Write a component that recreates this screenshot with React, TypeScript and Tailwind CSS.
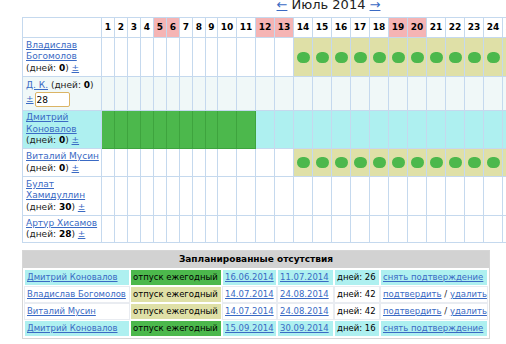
import React from "react";

const DAYS = Array.from({ length: 31 }, (_, i) => i + 1);
const WEEKEND = new Set([5, 6, 12, 13, 19, 20, 26, 27]);

type Kind = "empty" | "dot" | "green" | "cyan" | "light";

type Person = {
  name: React.ReactNode;
  days: number;
  height: string;
  nameBg: string;
  cell: (d: number) => Kind;
};

const PEOPLE: Person[] = [
  {
    name: (
      <>
        Владислав
        <br />
        Богомолов
      </>
    ),
    days: 0,
    height: "h-[39px]",
    nameBg: "bg-white",
    cell: (d) => (d >= 14 ? "dot" : "empty"),
  },
  {
    name: null,
    days: 0,
    height: "h-[34px]",
    nameBg: "bg-[#f0f8f8]",
    cell: () => "light",
  },
  {
    name: (
      <>
        Дмитрий
        <br />
        Коновалов
      </>
    ),
    days: 0,
    height: "h-[38px]",
    nameBg: "bg-[#aef0f0]",
    cell: (d) => (d <= 11 ? "green" : "cyan"),
  },
  {
    name: "Виталий Мусин",
    days: 0,
    height: "h-[28px]",
    nameBg: "bg-white",
    cell: (d) => (d >= 14 ? "dot" : "empty"),
  },
  {
    name: (
      <>
        Булат
        <br />
        Хамидуллин
      </>
    ),
    days: 30,
    height: "h-[39px]",
    nameBg: "bg-white",
    cell: () => "empty",
  },
  {
    name: "Артур Хисамов",
    days: 28,
    height: "h-[27px]",
    nameBg: "bg-white",
    cell: () => "empty",
  },
];

const ABSENCES = [
  { name: "Дмитрий Коновалов", confirmed: true, from: "16.06.2014", to: "11.07.2014", days: 26 },
  { name: "Владислав Богомолов", confirmed: false, from: "14.07.2014", to: "24.08.2014", days: 42 },
  { name: "Виталий Мусин", confirmed: false, from: "14.07.2014", to: "24.08.2014", days: 42 },
  { name: "Дмитрий Коновалов", confirmed: true, from: "15.09.2014", to: "30.09.2014", days: 16 },
];

const link = "text-[#3a6ac4] underline";

const DayCell = ({ kind }: { kind: Kind }) => {
  if (kind === "dot")
    return (
      <td className="border border-[#c5d9ee] bg-[#dfe0a7] p-0">
        <span className="block mx-auto w-[13px] h-[11px] rounded-full bg-[#4cb84c]" />
      </td>
    );
  if (kind === "green") return <td className="border border-[#3ea43e] bg-[#4cb84c] p-0" />;
  if (kind === "cyan") return <td className="border border-[#c5d9ee] bg-[#aef0f0] p-0" />;
  if (kind === "light") return <td className="border border-[#c5d9ee] bg-[#f0f8f8] p-0" />;
  return <td className="border border-[#c5d9ee] bg-white p-0" />;
};

export default function App() {
  return (
    <div className="w-[506px] h-[344px] overflow-hidden bg-white font-['DejaVu_Sans',Verdana,sans-serif] text-[9px] leading-[11.5px] text-[#222]">
      <div className="pl-[22px]">
        {/* month switcher */}
        <div className="w-[613px] -mt-[2px] mb-[6px] h-[13px] text-center text-[13px] leading-[13px] text-[#222] whitespace-nowrap">
          <a className={link}>←</a>&nbsp;Июль 2014&nbsp;<a className={link}>→</a>
        </div>

        {/* calendar grid */}
        <table className="border-collapse table-fixed w-[613px]">
          <colgroup>
            <col className="w-[79px]" />
            {DAYS.map((d) => (
              <col key={d} className={d < 9 ? "w-[13px]" : d === 9 ? "w-[12px]" : "w-[19px]"} />
            ))}
          </colgroup>
          <thead>
            <tr>
              <th className="border border-[#c5d9ee] h-[20px] bg-white" />
              {DAYS.map((d) => (
                <th
                  key={d}
                  className={`border border-[#c5d9ee] p-0 text-center font-bold text-black ${
                    WEEKEND.has(d) ? "bg-[#f5b4b4]" : "bg-white"
                  }`}
                >
                  {d}
                </th>
              ))}
            </tr>
          </thead>
          <tbody>
            {PEOPLE.map((p, i) => (
              <tr key={i}>
                <td
                  className={`border border-[#c5d9ee] ${p.height} ${p.nameBg} px-[3px] py-[1px] align-middle whitespace-nowrap`}
                >
                  {p.name ? (
                    <>
                      <a className={link}>{p.name}</a>
                      <br />
                      (дней: <b className="text-black">{p.days}</b>) <a className={link}>±</a>
                    </>
                  ) : (
                    <>
                      <a className={link}>Д. К.</a> (дней: <b className="text-black">0</b>)
                      <div className="flex items-center gap-[1px] mt-[1px]">
                        <a className={link}>±</a>
                        <input
                          readOnly
                          defaultValue="28"
                          className="w-[35px] h-[15px] border border-[#dbb465] rounded-[2px] bg-white px-[1px] text-[9px] text-black outline-none"
                        />
                      </div>
                    </>
                  )}
                </td>
                {DAYS.map((d) => (
                  <DayCell key={d} kind={p.cell(d)} />
                ))}
              </tr>
            ))}
          </tbody>
        </table>

        {/* planned absences */}
        <div className="mt-[7px] w-[468px] border border-[#d6d6d6] text-[8.5px] leading-[11px]">
          <div className="h-[17px] bg-[#d2d2d2] flex items-center justify-center font-bold text-black text-[9px]">
            Запланированные отсутствия
          </div>
          <table className="border-separate border-spacing-[2px] w-full table-fixed whitespace-nowrap">
            <colgroup>
              <col className="w-[104px]" />
              <col className="w-[90px]" />
              <col className="w-[53px]" />
              <col className="w-[55px]" />
              <col className="w-[44px]" />
              <col />
            </colgroup>
            <tbody>
              {ABSENCES.map((a, i) => {
                const rowBg = a.confirmed ? "bg-[#aef0f0]" : "bg-white shadow-[0_0_0_1px_#e9ecf1]";
                return (
                  <tr key={i} className="h-[15px]">
                    <td className={`${rowBg} px-[2px]`}>
                      <a className={link}>{a.name}</a>
                    </td>
                    <td className={`${a.confirmed ? "bg-[#4cb84c]" : "bg-[#dfe0a7]"} px-[2px] text-black`}>
                      отпуск ежегодный
                    </td>
                    <td className={`${rowBg} px-[2px]`}>
                      <a className={link}>{a.from}</a>
                    </td>
                    <td className={`${rowBg} px-[2px]`}>
                      <a className={link}>{a.to}</a>
                    </td>
                    <td className={`${rowBg} px-[2px] text-black`}>дней: {a.days}</td>
                    <td className={`${rowBg} px-[2px]`}>
                      {a.confirmed ? (
                        <a className={link}>снять подтверждение</a>
                      ) : (
                        <>
                          <a className={link}>подтвердить</a> / <a className={link}>удалить</a>
                        </>
                      )}
                    </td>
                  </tr>
                );
              })}
            </tbody>
          </table>
        </div>

        {/* next block, only its top edge is visible */}
        <div className="mt-[6px] w-[253px] h-[10px] border-t border-[#dcdcdc] flex">
          <div className="w-[20px] h-[2px] bg-[#bcc6d6]" />
        </div>
      </div>
    </div>
  );
}
